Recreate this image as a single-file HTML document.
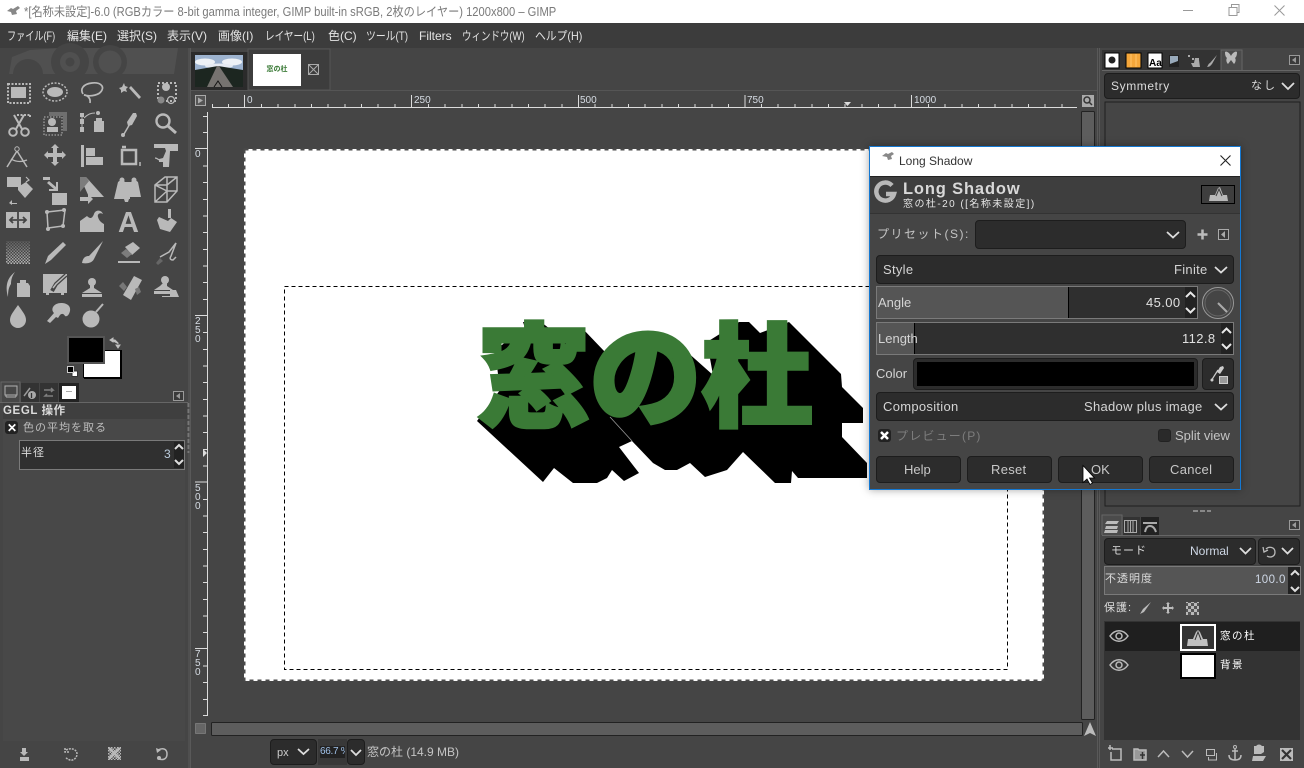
<!DOCTYPE html>
<html><head><meta charset="utf-8">
<style>
html,body{margin:0;padding:0;width:1304px;height:768px;overflow:hidden;background:#454545;}
body{font-family:"Liberation Sans","Noto Sans CJK JP",sans-serif;font-size:12px;color:#dcdcdc;position:relative;}
.t{position:absolute;white-space:nowrap;line-height:16px;}
.b{position:absolute;box-sizing:border-box;}
.c{background:#2c2c2c;border:1px solid #1d1d1d;border-radius:4px;}
.spin{background:#2f2f2f;border:1px solid #7a7a7a;}
svg{position:absolute;left:0;top:0;overflow:visible;}
.ic{fill:#b9b9b9;stroke:none;}
.ln{fill:none;stroke:#b9b9b9;stroke-width:2;}
.m{color:#e4e4e4;top:28px;transform-origin:0 0;}
</style></head><body>

<div class="b" style="left:0;top:0;width:1304px;height:23px;background:#fff"></div>
<div class="t" style="left:24px;top:4px;color:#7a7a7a;font-size:12.5px;transform:scaleX(.895);transform-origin:0 0">*[名称未設定]-6.0 (RGBカラー 8-bit gamma integer, GIMP built-in sRGB, 2枚のレイヤー) 1200x800 – GIMP</div>
<div class="b" style="left:0;top:23px;width:1304px;height:25px;background:#3c3c3c"></div>
<div class="t m" style="left:7px;transform:scaleX(.76)">ファイル(F)</div>
<div class="t m" style="left:67px">編集(E)</div>
<div class="t m" style="left:117px">選択(S)</div>
<div class="t m" style="left:167px">表示(V)</div>
<div class="t m" style="left:218px">画像(I)</div>
<div class="t m" style="left:265px;transform:scaleX(.8)">レイヤー(L)</div>
<div class="t m" style="left:328px">色(C)</div>
<div class="t m" style="left:366px;transform:scaleX(.82)">ツール(T)</div>
<div class="t m" style="left:419px">Filters</div>
<div class="t m" style="left:462px;transform:scaleX(.79)">ウィンドウ(W)</div>
<div class="t m" style="left:535px;transform:scaleX(.9)">ヘルプ(H)</div>

<svg width="1304" height="768" viewBox="0 0 1304 768">
  <path d="M7 11l4-3 2 1 5-3 2 2-4 3 1 3-5 1-1-3z" fill="#888"/>
  <path d="M1183 10.500h10" stroke="#999" fill="none"/>
  <path d="M1229 7.500h8v8h-8zM1231.500 7v-2.500h7.500v8h-2.500" stroke="#999" fill="none"/>
  <path d="M1274.500 5.500l10 10M1284.500 5.500l-10 10" stroke="#999" fill="none"/>

  <!-- toolbox watermark -->
  <path d="M9 74L12 57L30 50L60 48H178L174 74z" fill="#505050"/>
  <path d="M13 74a15 15 0 0 1 30 0z" fill="#454545"/>
  <circle cx="70" cy="62" r="19" fill="#454545"/><circle cx="70" cy="62" r="10" fill="#505050"/><circle cx="70" cy="62" r="4.500" fill="#454545"/>
  <circle cx="110" cy="62" r="17" fill="#454545"/><circle cx="110" cy="62" r="11.500" fill="#505050"/>
  <rect x="0" y="74" width="188" height="8" fill="#454545"/>

  <!-- row 1 -->
  <g class="ic">
    <rect x="11" y="87" width="15" height="11"/>
    <path d="M8 84h22v19h-22z" fill="none" stroke="#b9b9b9" stroke-width="2" stroke-dasharray="2 1.500"/>
    <ellipse cx="55" cy="92" rx="8" ry="5"/>
    <ellipse cx="55" cy="92" rx="12" ry="9" fill="none" stroke="#b9b9b9" stroke-width="1.500" stroke-dasharray="2 1.500"/>
    <path d="M129 88l2-2 10 11-2 2z"/>
    <path d="M124 83l1 3 3 1-2 2 1 3-3-1-3 2v-3l-2-2 3-1z"/>
    <path d="M158 83h18v18h-18z" fill="none" stroke="#b9b9b9" stroke-width="2" stroke-dasharray="2 2"/>
    <circle cx="166" cy="87" r="4"/>
    <circle cx="161" cy="100" r="3.500" fill="#888"/>
    <circle cx="171" cy="100" r="3.500" fill="none" stroke="#b9b9b9" stroke-width="1.300"/>
  </g>
  <path d="M83 94c-3-5 0-10 9-11 8-1 12 3 10 7-2 5-11 7-18 5 3 0 7 3 6 8" class="ln" style="stroke-width:1.700"/>
  <!-- row 2 -->
  <g>
    <path d="M17 115h13M30 115v2" stroke="#b9b9b9" stroke-width="2" stroke-dasharray="2 1.500" fill="none"/>
    <path d="M14 115l8 14M24 115l-8 14" class="ln"/>
    <circle cx="13" cy="132" r="3.800" class="ln"/><circle cx="25" cy="132" r="3.800" class="ln"/>
    <path d="M49 112h18v19h-4v-15h-14z" fill="#6f6f6f"/>
    <rect x="44" y="117" width="18" height="18" fill="none" stroke="#b9b9b9" stroke-dasharray="1.500 1.500"/>
    <circle cx="52" cy="122" r="4" class="ic"/><path d="M47 127h11v5h-11z" class="ic"/>
    <path d="M80 113h4v4h-4zM80 127h4v5h-4zM80 119h4v5h-4z" class="ic"/><path d="M82 115v14" class="ln" style="stroke-width:1"/>
    <path d="M84 118c4-4 7-5 11-5" class="ln" style="stroke-width:1"/><circle cx="98" cy="113" r="2" class="ic"/>
    <path d="M94 121h10v11h-10zM96 118h6v3h-6z" class="ic"/>
    <path d="M124 134l7-12" stroke="#b9b9b9" stroke-width="1.500"/><path d="M127 122l6-9 3 0 1 3-5 9-4 1z" class="ic"/><circle cx="123" cy="135" r="2" class="ic"/>
    <circle cx="163" cy="121" r="6.500" fill="none" stroke="#b9b9b9" stroke-width="2.400"/><path d="M168 126l8 7" stroke="#b9b9b9" stroke-width="3"/>
  </g>
  <!-- row 3 -->
  <g>
    <circle cx="17" cy="149" r="2.200" class="ln" style="stroke-width:1"/>
    <path d="M17 151l-10 16M17 151l10 16" class="ln" style="stroke-width:1.500"/><path d="M11 159c5 3 11 3 16 1" class="ln" style="stroke-width:1.300"/>
    <path d="M55 144l4 4h-2v5h5v-2l4 4-4 4v-2h-5v5h2l-4 4-4-4h2v-5h-5v2l-4-4 4-4v2h5v-5h-2z" class="ic"/>
    <path d="M81 145h3v22h-3zM86 148h9v8h-9zM86 157h17v8h-17z" class="ic"/>
    <path d="M122 147h4M122 150h14v14h-14z" fill="none" stroke="#b9b9b9" stroke-width="2.500"/>
    <path d="M140 162v4" stroke="#b9b9b9" stroke-width="1.500"/>
    <path d="M154 144h24v7h-8l-1 16h-6v-5h-4v-3l4-1 3-7-1-3h-11z" class="ic"/><path d="M155 158c3 0 4 3 7 3" class="ln" style="stroke-width:1.200"/>
  </g>
  <!-- row 4 -->
  <g>
    <path d="M7 177h14v10h-14zM18 187l8-5 7 7-8 9-7-8zM12 200l-3 3 3 2v-1h5v-1h-5z" class="ic"/>
    <path d="M26 177l3 3-3 2" class="ln" style="stroke-width:1.200"/>
    <path d="M43 177h7v3h-7zM49 181l7 6v-5h2v9h-9v-2h5l-7-6z" class="ic"/><rect x="52" y="193" width="15" height="12" class="ic"/>
    <path d="M80 177h6l18 20h-15z" class="ic"/><path d="M80 177h6l3 4-9 11z" fill="#7c7c7c"/>
    <path d="M80 197h8v-3l5 5-5 5v-3h-8z" class="ic"/>
    <path d="M118 182l4-3 3 3h6l3-3 4 3 3 15h-11v2h-1l-1 3h-3l-1-3h-10z" class="ic"/>
    <circle cx="122" cy="180" r="2.500" class="ic"/><circle cx="134" cy="180" r="2.500" class="ic"/>
    <path d="M155 185l10-8h12v14l-10 11h-12zM155 185h12v17M167 185l10-8M155 202l12-11M155 185l12 6h10M167 191v-14" class="ln" style="stroke-width:1.500"/>
  </g>
  <!-- row 5 -->
  <g>
    <path d="M6 212h24v16h-24z" class="ic"/><path d="M17 220h-7m3-3l-3 3 3 3M19 220h7m-3-3l3 3-3 3M18 212v16" stroke="#454545" stroke-width="1.800" fill="none"/>
    <path d="M47 212l18-2-2 16-15 2z" class="ln" style="stroke-width:1.500"/>
    <circle cx="47" cy="212" r="2" class="ic"/><circle cx="64" cy="210" r="2" class="ic"/><circle cx="63" cy="226" r="2" class="ic"/><circle cx="48" cy="229" r="2" class="ic"/>
    <path d="M80 232v-11l7-5c3 3 5 3 7-2 1-4 7-5 9 0-3-2-6 0-5 3 1 4 4 6 6 7v8z" class="ic"/>
    <text x="128.500" y="232" text-anchor="middle" font-family="Liberation Sans" font-weight="700" font-size="29" fill="#b9b9b9">A</text>
    <path d="M168 209h3v9h-3z" class="ic"/><path d="M157 220l2-3 9 4 3-3 6 4-7 10-10-3z" class="ic"/>
  </g>
  <defs>
    <pattern id="ck" width="3" height="3" patternUnits="userSpaceOnUse"><rect width="3" height="3" fill="#454545"/><rect width="1.500" height="1.500" fill="#b9b9b9"/><rect x="1.500" y="1.500" width="1.500" height="1.500" fill="#b9b9b9"/></pattern>
    <pattern id="ck2" width="6" height="6" patternUnits="userSpaceOnUse"><rect width="6" height="6" fill="#b9b9b9"/><rect width="3" height="3" fill="#555"/><rect x="3" y="3" width="3" height="3" fill="#555"/></pattern>
    <linearGradient id="fade" x1="0" x2="0" y1="0" y2="1"><stop offset="0" stop-color="#454545" stop-opacity=".8"/><stop offset="1" stop-color="#454545" stop-opacity="0"/></linearGradient>
  </defs>
  <g>
    <rect x="6" y="241" width="24" height="23" fill="url(#ck)"/>
    <rect x="6" y="241" width="24" height="23" fill="url(#fade)"/>
    <path d="M45 264l3-8 15-14 3 3-15 15z" class="ic"/>
    <path d="M82 263c1-6 4-7 7-7l14-15-9 18c-2 4-7 5-12 4z" class="ic"/>
    <path d="M125 247l8-5 7 6-8 7z" class="ic"/><path d="M121 253l5-4 6 5-5 4z" fill="#7c7c7c"/><path d="M118 261h22v2h-22z" class="ic"/>
    <path d="M160 257l9-5 7-9-5 13c-2 3 0 4 2 4l3-3" class="ln" style="stroke-width:1.500"/><path d="M156 263l4-5 3 3-5 4z" fill="#666"/>
  </g>
  <!-- row 7 -->
  <g>
    <path d="M15 272c-8 6-10 14-7 25 0-7 1-10 3-13 0-4 1-8 4-12z" class="ic"/><path d="M17 283h11l2 3v11h-13v-11z" class="ic"/><path d="M20 280h6v3h-6z" class="ic"/>
    <path d="M43 274h24v19h-24z" class="ic"/><path d="M52 291l4-7 10-9" stroke="#454545" stroke-width="4" fill="none"/><path d="M53 288l3-4 10-9" stroke="#b9b9b9" stroke-width="1.500" fill="none"/>
    <path d="M46 293h3v2h-3zM61 293h3v2h-3z" class="ic"/>
    <circle cx="92" cy="282" r="4" class="ic"/><path d="M90 285h4v3l8 5h-20l8-5z M82 294h20v3h-20z" class="ic"/>
    <path d="M123 295l11-19 8 4-11 20z" class="ic"/><path d="M119 286l4-4 4 5-3 4z" fill="#777"/><path d="M135 289l4-2 2 5-4 3z" fill="#777"/>
    <circle cx="165" cy="280" r="4" class="ic"/><path d="M163 283h4v3l6 4h-19l6-4z" class="ic"/><path d="M162 296l8 0 0-6h6l3 7h-17z M154 291h16v3h-16z" class="ic"/>
  </g>
  <!-- row 8 -->
  <g>
    <path d="M18 305c4 6 8 10 8 15a8 8 0 0 1-16 0c0-5 4-9 8-15z" class="ic"/>
    <path d="M47 321l7-8c-4-4 0-10 7-10 6 0 10 3 9 8-1 4-3 6-5 5-1-2-3-3-5-1l-2 3-2-1-6 6z" class="ic"/>
    <circle cx="91" cy="319" r="8.500" class="ic"/><path d="M96 312l7-8" stroke="#b9b9b9" stroke-width="2"/>
  </g>
  <!-- FG/BG -->
  <rect x="83.500" y="350.500" width="37" height="27" fill="#fff" stroke="#000" stroke-width="1"/>
  <path d="M84 378h37v1h-37zM121 350h1v29h-1z" fill="#000"/>
  <rect x="68" y="337" width="36" height="26" fill="#000" stroke="#555" stroke-width="2"/>
  <path d="M110 340h5l3 3v1M118 348l-2-3h4zM110 340l3-2v4z" fill="#c0c0c0" stroke="#c0c0c0" stroke-width="1"/>
  <rect x="72" y="371" width="5.500" height="5.500" fill="#fff" stroke="#333"/><rect x="67.500" y="366.500" width="6" height="6" fill="#000" stroke="#ccc"/>

  <!-- left dock tabs -->
  <path d="M1 402V382h19v20" fill="#474747" stroke="#666" stroke-width="1"/>
  <rect x="21" y="383" width="18" height="19" fill="#333"/><rect x="40" y="383" width="18" height="19" fill="#333"/><rect x="59" y="383" width="20" height="19" fill="#222"/>
  <rect x="5" y="386" width="12" height="9" fill="none" stroke="#b0b0b0"/><path d="M6 395v2M16 395v2M6 397h10" stroke="#b0b0b0" fill="none"/>
  <path d="M24 396l6-8" stroke="#9a9a9a" stroke-width="1.500"/><circle cx="32" cy="395" r="4" fill="#aaa"/><path d="M31.500 393v5" stroke="#333" stroke-width="1.300"/>
  <path d="M44 390h9l-2-2M53 390l-2 2M53 396h-8l2-2" stroke="#808080" fill="none" stroke-width="1.500"/>
  <rect x="62" y="386" width="14" height="13" fill="#fff"/><rect x="66" y="391" width="6" height="1" fill="#aaa"/>
  <rect x="173.500" y="391.500" width="10" height="9" fill="#3a3a3a" stroke="#999"/><path d="M180 393v6l-4-3z" fill="#999"/>
  <path d="M0 402.500h188" stroke="#666"/>
  <rect x="3" y="403" width="184" height="16" fill="#3f3f3f"/>
  <rect x="3" y="419" width="182" height="322" fill="#484848"/>

  <!-- bottom-left icons -->
  <g>
    <path d="M22 748h4v4h2l-4 4-4-4h2zM20 757h9v4h-9z" class="ic"/>
    <path d="M66 750c6-3 11 0 11 4s-4 7-7 6-4-2-4-3M65 748v4h4" class="ln" style="stroke-width:1.500" stroke-dasharray="2 1"/>
    <rect x="108" y="747" width="13" height="13" fill="url(#ck)"/><path d="M109 748l11 11M120 748l-11 11" stroke="#b9b9b9" stroke-width="2.500"/>
    <path d="M158 750c4-2 9-2 9 4s-5 6-8 5" class="ln" style="stroke-width:1.500"/><path d="M156 748l1 5 4-3z" class="ic"/><circle cx="159" cy="758" r="2" class="ic"/>
  </g>

  <!-- dock separators -->
  <path d="M190.500 48v720M189 48v720" stroke="#595959" fill="none"/>
  <path d="M188.500 403v50" stroke="#777" stroke-width="2" stroke-dasharray="4 2"/>
  <path d="M1097.500 48v720M1099.500 48v720" stroke="#595959" fill="none"/>

  <!-- notebook tabs -->
  <rect x="191" y="52" width="57" height="38" fill="#2b2b2b"/>
  <rect x="248" y="49" width="82" height="41" fill="#3d3d3d" stroke="#555"/>
  <path d="M191 90.500H1097" stroke="#555"/>
  <rect x="195" y="55" width="48" height="32" fill="#9db3cf"/>
  <ellipse cx="205" cy="62" rx="10" ry="3.500" fill="#eef2f6"/><ellipse cx="232" cy="62" rx="10" ry="3.500" fill="#eef2f6"/><ellipse cx="219" cy="66" rx="14" ry="2.500" fill="#e6ebf2"/>
  <path d="M195 87V70l23-4 25 4v17z" fill="#1c2620"/>
  <path d="M207 87l10-21h2l14 21z" fill="#767370"/><path d="M214 87l4-6 4 6" stroke="#111" fill="none"/>
  <rect x="253" y="54" width="48" height="32" fill="#fff"/>
  <text x="277" y="71" text-anchor="middle" font-size="7" font-family="Liberation Sans,Noto Sans CJK JP,sans-serif" font-weight="700" fill="#3a7a36">窓の杜</text>
  <rect x="308.500" y="64.500" width="10" height="10" fill="none" stroke="#aaa"/><path d="M309 65l9 9M318 65l-9 9" stroke="#aaa"/>

  <!-- canvas corners -->
  <rect x="195.500" y="95.500" width="10" height="10" fill="#555" stroke="#aaa"/><path d="M198 97.500v6l5-3z" fill="#aaa"/>
  <rect x="1082" y="95" width="12" height="12" fill="#aaa"/><circle cx="1087" cy="100" r="3" fill="none" stroke="#333" stroke-width="1.500"/><path d="M1089 102l3 3" stroke="#333" stroke-width="1.500"/>
  <rect x="195.500" y="723.500" width="10" height="10" fill="#666" stroke="#999" stroke-dasharray="1 1"/>

  <!-- rulers -->
  <path d="M212 107.500H1077M207.500 112V716" stroke="#dcdcdc" fill="none"/>
  <path d="M212.500 107v-3M228.500 107v-3M261.500 107v-3M278 107v-3M295 107v-3M311.500 107v-3M328 107v-3M345 107v-3M361.500 107v-3M378 107v-3M395 107v-3M428.500 107v-3M445 107v-3M462 107v-3M478.500 107v-3M495 107v-3M512 107v-3M528.500 107v-3M545 107v-3M562 107v-3M595 107v-3M612 107v-3M628.500 107v-3M645 107v-3M662 107v-3M678.500 107v-3M695 107v-3M712 107v-3M728.500 107v-3M761.500 107v-3M778 107v-3M795 107v-3M812 107v-3M828.500 107v-3M845 107v-3M862 107v-3M878.500 107v-3M895 107v-3M928.500 107v-3M945 107v-3M962 107v-3M978.500 107v-3M995 107v-3M1012 107v-3M1028.500 107v-3M1045 107v-3M1062 107v-3M244.500 107V95M411.500 107V95M578.500 107V95M745 107V95M911.500 107V95" stroke="#dcdcdc" fill="none"/>
  <path d="M844 102h7l-3.500 4z" fill="#dcdcdc"/>
  <path d="M203 116.500h4M203 132.500h4M203 166h4M203 182.500h4M203 199.500h4M203 216h4M203 232.500h4M203 249.500h4M203 266h4M203 282.500h4M203 299.500h4M203 332.500h4M203 349.500h4M203 366h4M203 382.500h4M203 399.500h4M203 416h4M203 432.500h4M203 449.500h4M203 466h4M203 499.500h4M203 516h4M203 532.500h4M203 549.500h4M203 566h4M203 582.500h4M203 599.500h4M203 616h4M203 632.500h4M203 666h4M203 682.500h4M203 699.500h4M203 715.500h4M195 148.500h12M195 315.500h12M195 482h12M195 648.500h12" stroke="#dcdcdc" fill="none"/>
  <path d="M203 449l4 4-4 4z" fill="#dcdcdc"/>
  <g font-family="Liberation Sans,sans-serif" font-size="10" fill="#d6dce4">
    <text x="247" y="103">0</text><text x="414" y="103">250</text><text x="580" y="103">500</text><text x="747" y="103">750</text><text x="914" y="103">1000</text>
    <text x="195" y="157">0</text>
    <text x="195" y="324">2</text><text x="195" y="333">5</text><text x="195" y="342">0</text>
    <text x="195" y="491">5</text><text x="195" y="500">0</text><text x="195" y="509">0</text>
    <text x="195" y="657">7</text><text x="195" y="666">5</text><text x="195" y="675">0</text>
  </g>

  <!-- image -->
  <rect x="244" y="149" width="800" height="532" fill="#fff"/>
  <rect x="244.500" y="149.500" width="799" height="531" fill="none" stroke="#4a4a4a" stroke-width="2" stroke-dasharray="4 4"/>
  <rect x="284.500" y="286.500" width="723" height="383" fill="none" stroke="#000" stroke-dasharray="4 3"/>

  <!-- long shadow -->
  <path d="M525 328L523 322L541 322L550 329L583 329L605 352L640 336L677 343L713 375L707 342L739 322L749 322L760 333L789 322L841 374L842 387L863 408L863 423L842 423L842 437L867 463L867 478L798 478L792 471L791 483L775 483L743 452L727 470L705 477L690 463L677 470L665 470L653 463L632 441L619 447L639 473L624 481L612 470L607 478L597 483L573 483L554 468L543 482L477 421L500 390L495 350z" fill="#000"/>
  <path d="M610 417L632 441" stroke="#999" stroke-width=".8"/>
  <text x="478" y="417" font-family="Noto Sans CJK JP,sans-serif" font-weight="900" font-size="112" fill="#3a7a36" stroke="#3a7a36" stroke-width="3.500" textLength="335" lengthAdjust="spacingAndGlyphs">窓の杜</text>

  <!-- scrollbars -->
  <rect x="1081.500" y="111.500" width="13" height="608" fill="#5d5d5d" stroke="#222" rx="1"/>
  <rect x="211.500" y="722.500" width="871" height="13" fill="#5d5d5d" stroke="#222" rx="1"/>
  <path d="M1090 722l6 14-6-3-6 3z" fill="#bbb"/>

  <!-- right tabs -->
  <rect x="1102" y="50" width="122" height="20" fill="#333"/>
  <rect x="1105" y="53" width="14" height="15" fill="#fff" stroke="#000"/><circle cx="1112" cy="60" r="3.500" fill="#222"/>
  <rect x="1126" y="53" width="15" height="15" fill="#f4a63a" stroke="#000"/><path d="M1131 54v13M1136 54v13" stroke="#ffc46b"/>
  <rect x="1148" y="53" width="14" height="15" fill="#fff" stroke="#000"/>
  <text x="1149" y="66" font-family="Liberation Sans" font-weight="700" font-size="10" fill="#000">Aa</text>
  <rect x="1169" y="55" width="10" height="12" fill="#222"/><path d="M1170 56h8v5l-8 3z" fill="#9ab"/>
  <path d="M1188 55h2v2h-2zM1192 58h2v2h-2zM1195 58h4v2l1 7h-7l-2-4h3z" fill="#aaa"/>
  <path d="M1207 67c3 0 4-2 5-3l5-9-7 8c-2 1-2 3-3 4z" fill="#aaa"/>
  <path d="M1221 70V50h21v20" fill="#4b4b4b" stroke="#666"/>
  <path d="M1231 56c-2-4-5-5-6-4 0 4 1 5 2 6-1 1-1 4 1 6l3-4 3 4c2-2 2-5 1-6 1-1 2-2 2-6-1-1-4 0-6 4z" fill="#bbb"/>
  <rect x="1289.500" y="55.500" width="10" height="9" fill="#3a3a3a" stroke="#999"/><path d="M1296 57v6l-4-3z" fill="#999"/>
  <path d="M1102 70.500h198" stroke="#666"/>
  <rect x="1105" y="102" width="195" height="404" fill="#454545" stroke="#1f1f1f"/>
  <rect x="1193" y="510" width="5" height="2" fill="#888"/><rect x="1200" y="510" width="5" height="2" fill="#888"/><rect x="1207" y="510" width="4" height="2" fill="#888"/>

  <!-- layers tabs -->
  <path d="M1102 535V515h20v20" fill="#4b4b4b" stroke="#666"/>
  <rect x="1123" y="517" width="17" height="18" fill="#333"/><rect x="1141" y="517" width="18" height="18" fill="#222"/>
  <path d="M1107 521h12l-2 3h-12zM1106 526h12l-1 3h-12zM1105 530h13l-1 3h-13z" fill="#bbb"/>
  <rect x="1124.500" y="520.500" width="12" height="12" fill="none" stroke="#aaa"/><path d="M1128 521v11M1130.500 521v11M1133 521v11" stroke="#aaa"/>
  <path d="M1143 523h14M1145 532c1-4 2-6 5-6s5 3 6 6" stroke="#aaa" stroke-width="2" fill="none"/>
  <rect x="1289.500" y="520.500" width="10" height="9" fill="#3a3a3a" stroke="#999"/><path d="M1296 522v6l-4-3z" fill="#999"/>
  <path d="M1102 535.500h198" stroke="#666"/>
  <rect x="1104" y="621" width="196" height="119" fill="#333"/>
  <rect x="1105" y="622" width="195" height="29" fill="#1f1f1f"/>
  <path d="M1110 636c5-7 13-7 18 0-5 7-13 7-18 0z" fill="none" stroke="#bbb" stroke-width="1.500"/><circle cx="1119" cy="636" r="3" fill="none" stroke="#bbb" stroke-width="1.500"/>
  <path d="M1110 665c5-7 13-7 18 0-5 7-13 7-18 0z" fill="none" stroke="#bbb" stroke-width="1.500"/><circle cx="1119" cy="665" r="3" fill="none" stroke="#bbb" stroke-width="1.500"/>
  <rect x="1181" y="625" width="34" height="25" fill="#333" stroke="#fff" stroke-width="2"/>
  <path d="M1187 646l1-7h5l3-7 2-2 2 2 3 7h4l1 7z" fill="#c0c0c0"/><path d="M1195 640l3-8 3 8" stroke="#333" fill="none"/>
  <rect x="1181" y="654" width="34" height="24" fill="#fff" stroke="#000" stroke-width="2"/>
  <path d="M1140 614l4-2 7-10-8 7z" fill="#bbb"/>
  <path d="M1168 602l2 2h-1v3h3v-1l2 2-2 2v-1h-3v3h1l-2 2-2-2h1v-3h-3v1l-2-2 2-2v1h3v-3h-1z" fill="#bbb"/>
  <rect x="1186" y="602" width="13" height="13" fill="url(#ck2)"/>
  <g fill="none" stroke="#bbb" stroke-width="1.500">
    <path d="M1112 749h9v11h-10v-8"/><path d="M1110 745v5M1108 748h5" />
    <path d="M1134 749h4l1 1h7v10h-12z" fill="#999"/><path d="M1140 755h5M1142.500 752v7" stroke="#333"/>
    <path d="M1158 757l5.500-6 5.500 6M1182 751l5.500 6 5.500-6"/>
    <path d="M1206.500 749.500h8v6h-8zM1216.500 753v7h-8v-3" stroke-width="1"/>
    <circle cx="1235" cy="747" r="1.500" stroke-width="1"/><path d="M1235 749v11M1232 751h6M1229 755c0 4 3 5 6 5s6-1 6-5" />
  </g>
  <circle cx="1259" cy="748" r="3.500" fill="#bbb"/><path d="M1254 746h10v6l-3 2h-7zM1253 756h13l-3 5h-11z" fill="#bbb"/>
  <rect x="1280" y="748" width="13" height="13" fill="#bbb"/><path d="M1282 750l9 9M1291 750l-9 9" stroke="#333" stroke-width="2.200"/>
</svg>

<!-- GEGL panel -->
<div class="t" style="left:3px;top:403px;font-weight:700;font-size:11.500px;letter-spacing:.6px">GEGL 操作</div>
<div class="b" style="left:5px;top:421px;width:13px;height:13px;background:#222;border-radius:3px"></div>
<div class="t" style="left:7px;top:420px;font-weight:700;font-size:12px;color:#fff">✕</div>
<div class="t" style="left:23px;top:420px;font-size:11px;letter-spacing:1px;color:#bdbdbd">色の平均を取る</div>
<div class="b" style="left:19px;top:440px;width:166px;height:30px;background:#303030;border:1px solid #7a7a7a"></div>
<div class="t" style="left:21px;top:445px;font-size:11px;letter-spacing:1px">半径</div>
<div class="t" style="left:164px;top:446px;color:#bcd">3</div>
<div class="b" style="left:174px;top:442px;width:10px;height:26px;background:#222"></div>
<svg width="1304" height="768"><path d="M175 449l4-4 4 4M175 460l4 4 4-4" fill="none" stroke="#ddd" stroke-width="2"/></svg>

<!-- Right dock -->
<div class="b c" style="left:1104px;top:73px;width:196px;height:26px"></div>
<div class="t" style="left:1111px;top:78px;letter-spacing:.6px;font-size:12px">Symmetry</div>
<div class="t" style="left:1251px;top:78px;font-size:11px;letter-spacing:2px">なし</div>
<div class="b c" style="left:1104px;top:538px;width:152px;height:27px"></div>
<div class="t" style="left:1111px;top:543px;font-size:11px;letter-spacing:1px">モード</div>
<div class="t" style="left:1190px;top:543px;color:#cfd8e6;font-size:12px">Normal</div>
<div class="b c" style="left:1258px;top:538px;width:42px;height:27px"></div>
<div class="b spin" style="left:1104px;top:566px;width:197px;height:29px;background:#555"></div>
<div class="b" style="left:1288px;top:567px;width:12px;height:27px;background:#222"></div>
<div class="t" style="left:1105px;top:571px;font-size:11px;letter-spacing:1px">不透明度</div>
<div class="t" style="left:1255px;top:572px;color:#cfd8e6;font-size:11.500px;letter-spacing:.4px">100.0</div>
<div class="t" style="left:1104px;top:600px;font-size:11px;letter-spacing:1px">保護:</div>
<div class="t" style="left:1220px;top:628px;font-size:10.500px;letter-spacing:1.500px;color:#fff">窓の杜</div>
<div class="t" style="left:1220px;top:657px;font-size:10.500px;letter-spacing:1.500px;color:#fff">背景</div>
<svg width="1304" height="768">
  <path d="M1282 83l6 6 6-6M1240 548l5.500 5.500 5.500-5.500M1282 548l5.500 5.500 5.500-5.500" fill="none" stroke="#ddd" stroke-width="1.800"/>
  <path d="M1266 549c3-3 9-2 9 3s-5 6-8 4M1263 547l1 5 4-2" fill="none" stroke="#bbb" stroke-width="1.300"/>
  <path d="M1291 575l4-4 4 4M1291 587l4 4 4-4" fill="none" stroke="#ddd" stroke-width="2"/>
</svg>

<!-- status bar -->
<div class="b c" style="left:270px;top:739px;width:47px;height:26px"></div>
<div class="t" style="left:277px;top:745px;font-size:11px;color:#ccc">px</div>
<div class="b" style="left:318px;top:739px;width:29px;height:26px;background:#383838"></div>
<div class="b" style="left:320px;top:746px;width:25px;height:12px;background:#222"></div>
<div class="t" style="left:320px;top:744px;font-size:10px;letter-spacing:-.3px;color:#9fc0e8;width:25px;overflow:hidden">66.7 %</div>
<div class="b c" style="left:347px;top:739px;width:18px;height:26px"></div>
<div class="t" style="left:367px;top:744px;font-size:12px;color:#c4c4c4">窓の杜 (14.9 MB)</div>
<svg width="1304" height="768"><path d="M298 749l5.500 5 5.500-5M351 750l5 5 5-5" fill="none" stroke="#ddd" stroke-width="1.800"/></svg>

<!-- Dialog -->
<div class="b" style="left:869px;top:146px;width:372px;height:344px;background:#454545;border:1px solid #1478d2;box-shadow:0 0 8px rgba(0,0,0,.35)">
  <div class="b" style="left:0;top:0;width:370px;height:30px;background:#fff;border-bottom:1px solid #222"></div>
  <div class="b" style="left:0;top:30px;width:370px;height:37px;background:#3e3e3e;border-bottom:1px solid #333"></div>
</div>
<div class="t" style="left:899px;top:153px;color:#333;font-size:12px">Long Shadow</div>
<div class="t" style="left:903px;top:180px;font-weight:700;font-size:16.500px;letter-spacing:.85px;color:#d8d8d8;line-height:18px">Long Shadow</div>
<div class="t" style="left:903px;top:197px;font-size:10px;letter-spacing:1.450px;color:#e4e4e4">窓の杜-20 ([名称未設定])</div>
<div class="b" style="left:1201px;top:185px;width:34px;height:19px;border:1px solid #000"></div>
<div class="b c" style="left:975px;top:220px;width:211px;height:29px"></div>
<div class="t" style="left:877px;top:226px;font-size:12px;letter-spacing:1.500px;color:#c4c4c4">プリセット(S):</div>
<div class="b c" style="left:876px;top:255px;width:358px;height:29px"></div>
<div class="t" style="left:883px;top:262px;font-size:13px;letter-spacing:.3px;color:#d4d4d4">Style</div>
<div class="t" style="left:1174px;top:262px;font-size:13px;letter-spacing:.3px;color:#d4d4d4">Finite</div>
<div class="b spin" style="left:876px;top:286px;width:322px;height:33px"></div>
<div class="b" style="left:877px;top:287px;width:192px;height:31px;background:#555;border-right:1px solid #000"></div>
<div class="b" style="left:1185px;top:287px;width:12px;height:31px;background:#222"></div>
<div class="t" style="left:878px;top:295px;font-size:13px;color:#d4d4d4">Angle</div>
<div class="t" style="left:1146px;top:295px;font-size:13px;letter-spacing:.4px;color:#e0e0e0">45.00</div>
<div class="b spin" style="left:876px;top:322px;width:358px;height:33px"></div>
<div class="b" style="left:877px;top:323px;width:38px;height:31px;background:#555;border-right:1px solid #000"></div>
<div class="b" style="left:1221px;top:323px;width:12px;height:31px;background:#222"></div>
<div class="t" style="left:878px;top:331px;font-size:13px;color:#d4d4d4">Length</div>
<div class="t" style="left:1182px;top:331px;font-size:13px;letter-spacing:.4px;color:#e0e0e0">112.8</div>
<div class="t" style="left:876px;top:366px;font-size:13px;color:#d4d4d4">Color</div>
<div class="b c" style="left:913px;top:358px;width:285px;height:32px"></div>
<div class="b" style="left:917px;top:362px;width:277px;height:24px;background:#000"></div>
<div class="b c" style="left:1202px;top:358px;width:32px;height:32px"></div>
<div class="b c" style="left:876px;top:392px;width:358px;height:29px"></div>
<div class="t" style="left:883px;top:399px;font-size:13px;letter-spacing:.3px;color:#d4d4d4">Composition</div>
<div class="t" style="left:1084px;top:399px;font-size:13px;letter-spacing:.3px;color:#d4d4d4">Shadow plus image</div>
<div class="b" style="left:878px;top:429px;width:13px;height:13px;background:#222;border-radius:3px"></div>
<div class="t" style="left:896px;top:428px;font-size:12px;letter-spacing:1.200px;color:#7d7d7d">プレビュー(P)</div>
<div class="b" style="left:1158px;top:429px;width:13px;height:13px;background:#2a2a2a;border-radius:3px;border:1px solid #222"></div>
<div class="t" style="left:1175px;top:428px;font-size:13px;color:#c4c4c4">Split view</div>
<div class="b c" style="left:876px;top:456px;width:85px;height:27px"></div>
<div class="b c" style="left:967px;top:456px;width:85px;height:27px"></div>
<div class="b c" style="left:1058px;top:456px;width:85px;height:27px"></div>
<div class="b c" style="left:1149px;top:456px;width:85px;height:27px"></div>
<div class="t" style="left:904px;top:462px;font-size:13px;color:#c8c8c8">Help</div>
<div class="t" style="left:991px;top:462px;font-size:13px;letter-spacing:.3px;color:#c8c8c8">Reset</div>
<div class="t" style="left:1091px;top:462px;font-size:13px;color:#c8c8c8">OK</div>
<div class="t" style="left:1170px;top:462px;font-size:13px;letter-spacing:.3px;color:#c8c8c8">Cancel</div>

<svg width="1304" height="768">
  <path d="M882 156l4-3 2 1 4-2 2 2-3 2 1 3-4 1-1-3z" fill="#888"/>
  <path d="M1220.500 155.500l10 10M1230.500 155.500l-10 10" stroke="#222" stroke-width="1.100" fill="none"/>
  <path d="M892 185.500a9 9 0 1 0 2 8.500h-8" fill="none" stroke="#b9b9b9" stroke-width="4.500"/>
  <path d="M1209 201l1-6h5l3-7 2-1 3 8h4l1 6z" fill="#b9b9b9"/><path d="M1216 196l3-7 3 7" stroke="#3e3e3e" fill="none"/>
  <path d="M1167 232l6 5.500 6-5.500M1215 267l6 5.500 6-5.500M1215 404l6 5.500 6-5.500" fill="none" stroke="#ddd" stroke-width="1.800"/>
  <path d="M1202.500 229.500v10M1197.500 234.500h10" stroke="#bbb" stroke-width="2.500"/>
  <rect x="1218.500" y="229.500" width="10" height="10" fill="#3a3a3a" stroke="#aaa"/><path d="M1225 231v7l-4-3.500z" fill="#aaa"/>
  <path d="M1186 297l4.500-4.500 4.500 4.500M1186 308l4.500 4.500 4.500-4.500M1222 333l4.500-4.500 4.500 4.500M1222 344l4.500 4.500 4.500-4.500" fill="none" stroke="#e8e8e8" stroke-width="2"/>
  <circle cx="1218" cy="303" r="15.500" fill="none" stroke="#999"/><circle cx="1218" cy="303" r="13" fill="none" stroke="#666"/>
  <path d="M1218 303l9 9" stroke="#aaa" stroke-width="2"/>
  <path d="M1211 381l7-11" stroke="#ccc" stroke-width="1.200"/><path d="M1217 372l3-5 3-1 1 2-4 6z" fill="#ccc"/><circle cx="1212" cy="380" r="1.500" fill="#ccc"/>
  <rect x="1219.500" y="376.500" width="8" height="7" fill="#999" stroke="#ccc"/>
  <path d="M881 432l7 7M888 432l-7 7" stroke="#fff" stroke-width="2.500"/>
  <path d="M1083 465.500v17l4-3.500 3 5.500 2.500-1.500-3-5h5z" fill="#fff" stroke="#000" stroke-width=".8"/>
</svg>
</body></html>
